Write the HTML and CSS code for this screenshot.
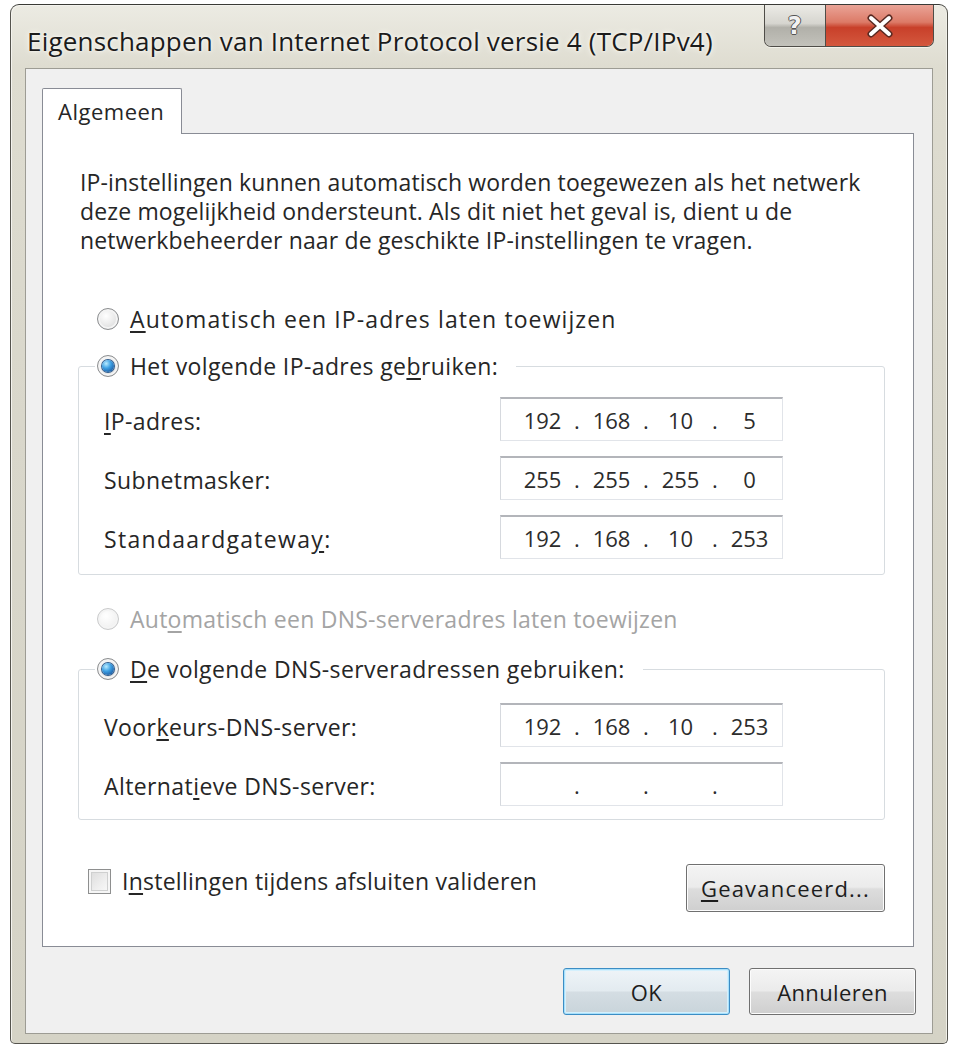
FILE: index.html
```html
<!DOCTYPE html>
<html lang="nl">
<head>
<meta charset="utf-8">
<title>Eigenschappen van Internet Protocol versie 4 (TCP/IPv4)</title>
<link rel="stylesheet" href="styles.css">
</head>
<body>
<div class="window">
  <div class="titlebar">
    <div class="title">Eigenschappen van Internet Protocol versie 4 (TCP/IPv4)</div>
    <div class="caption-buttons">
      <div class="cap-btn help"><span>?</span></div>
      <div class="cap-btn close">
        <svg width="30" height="24" viewBox="0 0 30 24"><path d="M6 4 L24 20 M24 4 L6 20" stroke="#5a2a22" stroke-width="7" stroke-linecap="round"/><path d="M6 4 L24 20 M24 4 L6 20" stroke="#ffffff" stroke-width="4" stroke-linecap="round"/></svg>
      </div>
    </div>
  </div>
  <div class="client">
    <div class="tabs"><div class="tab">Algemeen</div></div>
    <div class="panel">
      <p class="intro">IP-instellingen kunnen automatisch worden toegewezen als het netwerk deze mogelijkheid ondersteunt. Als dit niet het geval is, dient u de netwerkbeheerder naar de geschikte IP-instellingen te vragen.</p>

      <div class="option wide"><span class="radio"></span><span><u>A</u>utomatisch een IP-adres laten toewijzen</span></div>

      <fieldset class="group group-ip">
        <legend class="option"><span class="radio checked"></span><span>Het volgende IP-adres ge<u>b</u>ruiken:</span></legend>
        <div class="fields">
          <label class="flabel"><u>I</u>P-adres:</label>
          <div class="ipbox"><span class="oct">192</span><span class="dot">.</span><span class="oct">168</span><span class="dot">.</span><span class="oct">10</span><span class="dot">.</span><span class="oct">5</span></div>
          <label class="flabel">Subnetmasker:</label>
          <div class="ipbox"><span class="oct">255</span><span class="dot">.</span><span class="oct">255</span><span class="dot">.</span><span class="oct">255</span><span class="dot">.</span><span class="oct">0</span></div>
          <label class="flabel wide">Standaardgatewa<u>y</u>:</label>
          <div class="ipbox"><span class="oct">192</span><span class="dot">.</span><span class="oct">168</span><span class="dot">.</span><span class="oct">10</span><span class="dot">.</span><span class="oct">253</span></div>
        </div>
      </fieldset>

      <div class="option disabled dns-auto"><span class="radio"></span><span>Aut<u>o</u>matisch een DNS-serveradres laten toewijzen</span></div>

      <fieldset class="group group-dns">
        <legend class="option"><span class="radio checked"></span><span><u>D</u>e volgende DNS-serveradressen gebruiken:</span></legend>
        <div class="fields">
          <label class="flabel">Voor<u>k</u>eurs-DNS-server:</label>
          <div class="ipbox"><span class="oct">192</span><span class="dot">.</span><span class="oct">168</span><span class="dot">.</span><span class="oct">10</span><span class="dot">.</span><span class="oct">253</span></div>
          <label class="flabel">Alternat<u>i</u>eve DNS-server:</label>
          <div class="ipbox"><span class="oct"></span><span class="dot">.</span><span class="oct"></span><span class="dot">.</span><span class="oct"></span><span class="dot">.</span><span class="oct"></span></div>
        </div>
      </fieldset>

      <div class="bottom-row">
        <div class="check-option"><span class="checkbox"></span><span>I<u>n</u>stellingen tijdens afsluiten valideren</span></div>
        <button class="btn advanced"><u>G</u>eavanceerd...</button>
      </div>
    </div>
    <div class="dialog-buttons">
      <button class="btn default">OK</button>
      <button class="btn">Annuleren</button>
    </div>
  </div>
</div>
</body>
</html>
```

FILE: styles.css
```css
* { box-sizing: border-box; }

html, body {
  margin: 0;
  padding: 0;
  background: #ffffff;
}

body {
  font-family: "Open Sans", "Noto Sans", "DejaVu Sans", sans-serif;
  font-size: 23px;
  letter-spacing: 0.4px;
  color: #262626;
}

u { text-decoration: underline; text-underline-offset: 3px; text-decoration-thickness: 2px; }

.window {
  margin: 4px 0 0 10px;
  width: 938px;
  height: 1040px;
  border: 1px solid #55544e;
  border-top-color: #3a3a36;
  border-radius: 9px 9px 5px 5px;
  background: linear-gradient(180deg, #ecebe3 0%, #dedcd0 6%, #d9d7cb 40%, #d5d3c6 100%);
  padding: 0 14px 9px 14px;
  display: flex;
  flex-direction: column;
  box-shadow: inset 1px 1px 0 #f4f3ee, inset -1px 0 0 #f0efe8;
}

.titlebar {
  height: 63px;
  display: flex;
  align-items: flex-start;
  flex: none;
}

.title {
  padding: 19px 0 0 2px;
  font-size: 26px;
  letter-spacing: 0.2px;
  line-height: 34px;
  color: #1b1b1b;
  text-shadow: 0 0 6px #f8f7ef, 0 0 3px #ffffff;
  white-space: nowrap;
}

.caption-buttons {
  margin-left: auto;
  margin-right: -1px;
  display: flex;
  flex: none;
  height: 42px;
  border: 1px solid #4f4d48;
  border-top: none;
  border-radius: 0 0 7px 7px;
  overflow: hidden;
  box-shadow: 0 1px 0 #f3f2ea;
}

.cap-btn {
  display: flex;
  align-items: center;
  justify-content: center;
}

.cap-btn.help {
  width: 61px;
  background: linear-gradient(180deg, #ecebe6 0%, #d6d5cf 45%, #b1b0a9 55%, #c3c2bb 100%);
  border-right: 1px solid #4f4d48;
}

.cap-btn.help span {
  font-family: "DejaVu Sans", sans-serif;
  font-weight: bold;
  font-size: 24px;
  color: #f2f2f2;
  text-shadow: 1px 0 0 #555, -1px 0 0 #555, 0 1px 0 #555, 0 -1px 0 #555;
}

.cap-btn.close {
  width: 107px;
  background: linear-gradient(180deg, #eaa497 0%, #dc7a67 42%, #c8402a 55%, #d4583e 100%);
}

.client {
  flex: 1;
  background: #f0f0f0;
  border: 1px solid #9d9c94;
  padding: 19px 16px 0 16px;
  display: flex;
  flex-direction: column;
}

.tabs {
  display: flex;
  flex: none;
}

.tab {
  width: 140px;
  height: 46px;
  margin-bottom: -1px;
  background: #ffffff;
  border: 1px solid #898c95;
  border-bottom: none;
  border-radius: 2px 2px 0 0;
  padding: 7px 0 0 15px;
  font-size: 22px;
  letter-spacing: 0.5px;
  line-height: 30px;
  position: relative;
  z-index: 1;
}

.panel {
  flex: 1;
  width: 872px;
  background: #ffffff;
  border: 1px solid #898c95;
  padding: 34px 28px 0 35px;
  display: flex;
  flex-direction: column;
}

.intro {
  margin: 0;
  padding-left: 2px;
  line-height: 29px;
  width: 810px;
  letter-spacing: 0.15px;
}

.option {
  display: flex;
  align-items: center;
  height: 30px;
  line-height: 30px;
  padding-left: 19px;
  white-space: nowrap;
}

.option.wide { letter-spacing: 1.1px; }
.flabel.wide { letter-spacing: 1.3px; }

.option > .radio { margin-right: 11px; }

.intro + .option { margin-top: 49px; }

.radio {
  flex: none;
  width: 22px;
  height: 22px;
  border-radius: 50%;
  border: 1px solid #8b8d8f;
  background: radial-gradient(circle at 40% 35%, #ffffff 0%, #ececec 45%, #cfd0d1 100%);
  box-shadow: inset 0 0 0 2px #f4f4f4;
  position: relative;
}

.radio.checked::after {
  content: "";
  position: absolute;
  left: 4px;
  top: 4px;
  width: 12px;
  height: 12px;
  border-radius: 50%;
  background: radial-gradient(circle at 35% 30%, #b9ecff 0%, #3ea1e4 40%, #1d5ea6 80%, #123f77 100%);
  box-shadow: 0 0 0 1px #2f5d8e;
}

.disabled { color: #a4a4a4; letter-spacing: 0.25px; }
.disabled .radio {
  border-color: #c9cacb;
  background: radial-gradient(circle at 40% 35%, #ffffff 0%, #f3f3f3 60%, #e4e4e4 100%);
}

.group {
  margin: 17px 0 0 0;
  width: 807px;
  border: 1px solid #d7dce0;
  border-radius: 3px;
  padding: 16px 24px 15px 25px;
  min-width: 0;
}

.group legend.option {
  margin-left: -9px;
  padding: 0 18px 0 2px;
  background: #ffffff;
}

.fields {
  display: grid;
  grid-template-columns: 396px 283px;
  row-gap: 15px;
  align-items: center;
}

.flabel {
  line-height: 30px;
  white-space: nowrap;
  padding-top: 4px;
}

.ipbox {
  height: 44px;
  display: flex;
  align-items: center;
  padding-left: 17px;
  background: #ffffff;
  border: 1px solid #e1e4e9;
  border-top: 2px solid #b3b5ba;
  border-left-color: #d6d9de;
  font-size: 22px;
  letter-spacing: 0;
  color: #2c2c2c;
}

.oct {
  width: 49px;
  text-align: center;
}

.dot {
  width: 20px;
  text-align: center;
}

.dns-auto { margin-top: 29px; }

.group-dns {
  margin-top: 20px;
  padding-top: 19px;
  padding-bottom: 13px;
}

.bottom-row {
  margin-top: 44px;
  display: flex;
  align-items: flex-start;
  padding-left: 10px;
}

.check-option {
  display: flex;
  align-items: center;
  height: 30px;
  margin-top: 2px;
  white-space: nowrap;
  letter-spacing: 0.25px;
}

.checkbox {
  flex: none;
  width: 23px;
  height: 25px;
  margin-right: 11px;
  border: 1px solid #8e8f8f;
  background: linear-gradient(135deg, #d9d9d9 0%, #efefef 60%, #fbfbfb 100%);
  box-shadow: inset 0 0 0 2px #f6f6f6, inset 0 0 0 3px #cfd0d0;
}

.btn {
  font-family: inherit;
  font-size: 22px;
  letter-spacing: 0.4px;
  color: #1d1d1d;
  height: 48px;
  border: 1px solid #707070;
  border-radius: 3px;
  background: linear-gradient(180deg, #f4f4f4 0%, #ebebeb 48%, #dddddd 52%, #cfcfcf 100%);
  box-shadow: inset 0 0 0 1px #fcfcfc;
  padding: 0;
  cursor: default;
}

.btn.advanced {
  margin-left: auto;
  width: 199px;
  letter-spacing: 1.2px;
}

.dialog-buttons {
  flex: none;
  display: flex;
  justify-content: flex-end;
  gap: 19px;
  margin: 21px 0 18px 0;
}

.dialog-buttons .btn {
  width: 167px;
  height: 47px;
}

.btn.default {
  border-color: #3c8dc4;
  background: linear-gradient(180deg, #eef4f8 0%, #e3ebf0 48%, #d4dde3 52%, #c9d4da 100%);
  box-shadow: inset 0 0 0 1px #a8e0fb, inset 0 0 0 2px #d4f0fd;
}
```
